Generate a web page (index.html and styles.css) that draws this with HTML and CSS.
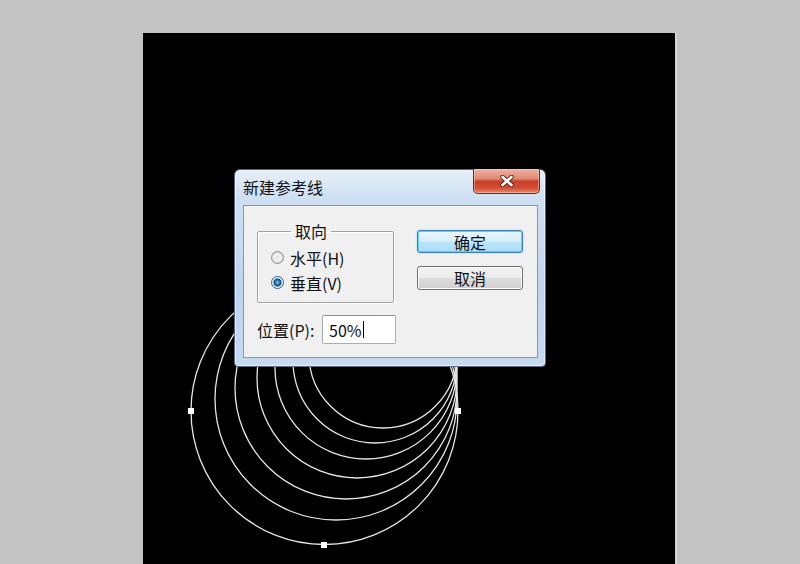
FILE: index.html
```html
<!DOCTYPE html>
<html lang="zh-CN">
<head>
    <meta charset="UTF-8">
    <title>新建参考线</title>
    <link rel="stylesheet" href="styles.css">
</head>
<body>
    <!-- Холст документа -->
    <div class="stage">
        <svg class="art" width="532" height="531" viewBox="143 33 532 531">
            <g fill="none" stroke="#e6e6e6" stroke-width="1.3">
                <circle cx="324.5" cy="411" r="133.5"/>
                <circle cx="336" cy="399" r="121"/>
                <circle cx="346" cy="388" r="111"/>
                <circle cx="357" cy="378" r="100"/>
                <circle cx="366" cy="368" r="91"/>
                <circle cx="375" cy="361" r="82"/>
                <circle cx="383" cy="354" r="74"/>
            </g>
            <g fill="#fff">
                <rect x="188" y="408" width="6" height="6"/>
                <rect x="455" y="408" width="6" height="6"/>
                <rect x="321" y="542" width="6" height="6"/>
            </g>
        </svg>

        <!-- Диалог -->
        <div class="dialog">
            <div class="titlebar">
                <span class="title">新建参考线</span>
                <button class="close">
                    <svg width="14" height="12" viewBox="0 0 14 12">
                        <path d="M2.5 2 L11.5 10 M11.5 2 L2.5 10" stroke="#5a1d14" stroke-width="4.4" stroke-linecap="round"/>
                        <path d="M2.5 2 L11.5 10 M11.5 2 L2.5 10" stroke="#fff" stroke-width="2.6" stroke-linecap="round"/>
                    </svg>
                </button>
            </div>
            <div class="client">
                <div class="top-row">
                    <fieldset class="group">
                        <legend>取向</legend>
                        <div class="option"><span class="radio"></span>水平(H)</div>
                        <div class="option"><span class="radio checked"></span>垂直(V)</div>
                    </fieldset>
                    <div class="buttons">
                        <button class="btn default">确定</button>
                        <button class="btn">取消</button>
                    </div>
                </div>
                <div class="pos-row">
                    <span class="label">位置(P):</span>
                    <div class="input"><span class="value">50%</span><span class="caret"></span></div>
                </div>
            </div>
        </div>
    </div>
</body>
</html>
```

FILE: styles.css
```css
* {
    margin: 0;
    padding: 0;
    box-sizing: border-box;
}

body {
    background: #c3c3c3;
    font-family: "Noto Sans CJK SC", "Noto Sans", sans-serif;
    font-size: 16px;
    color: #111;
    height: 564px;
    overflow: hidden;
}

/* Холст */
.stage {
    position: relative;
    margin: 33px 0 0 143px;
    width: 532px;
    height: 531px;
    background: #000;
    box-shadow: 2px 0 0 #d6d6d6;
}

.art {
    display: block;
}

/* Окно */
.dialog {
    position: absolute;
    left: 91px;
    top: 136px;
    width: 312px;
    height: 198px;
    display: flex;
    flex-direction: column;
    border: 1px solid #56687f;
    border-radius: 6px 6px 4px 4px;
    background: linear-gradient(180deg, #e6eff9 0%, #cfe0f3 14%, #bed4ed 60%, #c6daf0 100%);
    box-shadow: inset 0 0 0 1px rgba(255, 255, 255, 0.55);
}

.titlebar {
    height: 35px;
    display: flex;
    align-items: flex-start;
    padding-left: 8px;
}

.title {
    padding-top: 7px;
    line-height: 20px;
    color: #111;
}

.close {
    margin-left: auto;
    margin-right: 5px;
    margin-top: -1px;
    width: 67px;
    height: 25px;
    border: 1px solid #6b2a20;
    border-top: none;
    border-radius: 0 0 5px 5px;
    background: linear-gradient(180deg, #eeb3a3 0%, #df8a72 40%, #c93f27 52%, #d04c33 78%, #e88a68 100%);
    display: flex;
    align-items: center;
    justify-content: center;
    box-shadow: inset 0 0 0 1px rgba(255, 220, 210, 0.45);
}

/* Клиентская часть */
.client {
    flex: 1;
    margin: 0 7px 8px 8px;
    border: 1px solid #8198b3;
    background: #f0f0f0;
    padding-left: 13px;
}

.top-row {
    display: flex;
    align-items: flex-start;
}

.group {
    margin-top: 16px;
    width: 137px;
    height: 81px;
    border: 1px solid #a3a3a3;
    border-radius: 2px;
    box-shadow: inset 1px 1px 0 #fff, 1px 1px 0 #fff;
    padding: 5px 0 0 13px;
}

.group legend {
    margin-left: 20px;
    padding: 0 4px;
    line-height: 18px;
}

.option {
    height: 25px;
    display: flex;
    align-items: center;
    gap: 6px;
}

.radio {
    width: 13px;
    height: 13px;
    border-radius: 50%;
    border: 1px solid #8e8f8f;
    background: radial-gradient(circle, #e2e2e2 0, #f2f2f2 3px, #d8d8d8 6px);
}

.radio.checked {
    border-color: #2c628b;
    background: radial-gradient(circle, #8ad0f7 0, #2a7ac2 2px, #0f4c86 3.6px, #dce8f2 4.4px, #f4f7fa 6px);
}

.buttons {
    margin-top: 24px;
    margin-left: 23px;
    display: flex;
    flex-direction: column;
    gap: 13px;
}

.btn {
    width: 106px;
    height: 23px;
    font-family: inherit;
    font-size: 16px;
    line-height: 20px;
    color: #111;
    border: 1px solid #707070;
    border-radius: 3px;
    background: linear-gradient(180deg, #f3f3f3 0%, #ebebeb 48%, #dddddd 52%, #cfcfcf 100%);
    box-shadow: inset 0 0 0 1px #fcfcfc;
}

.btn.default {
    border-color: #3c7fb1;
    background: linear-gradient(180deg, #e8f6fd 0%, #d8effc 48%, #bee6fd 52%, #a9dbf6 100%);
    box-shadow: inset 0 0 0 1px #60d0f8, 0 0 2px #8ed6f5;
}

.btn + .btn {
    height: 24px;
}

.pos-row {
    margin-top: 12px;
    display: flex;
    align-items: center;
}

.label {
    width: 65px;
    line-height: 20px;
}

.input {
    width: 74px;
    height: 29px;
    border: 1px solid #abadb3;
    border-top-color: #8e9199;
    border-radius: 2px;
    background: #fff;
    display: flex;
    align-items: center;
    padding-left: 6px;
}

.value {
    line-height: 20px;
    color: #111;
}

.caret {
    width: 1px;
    height: 17px;
    margin-left: 1px;
    background: #000;
}
```
